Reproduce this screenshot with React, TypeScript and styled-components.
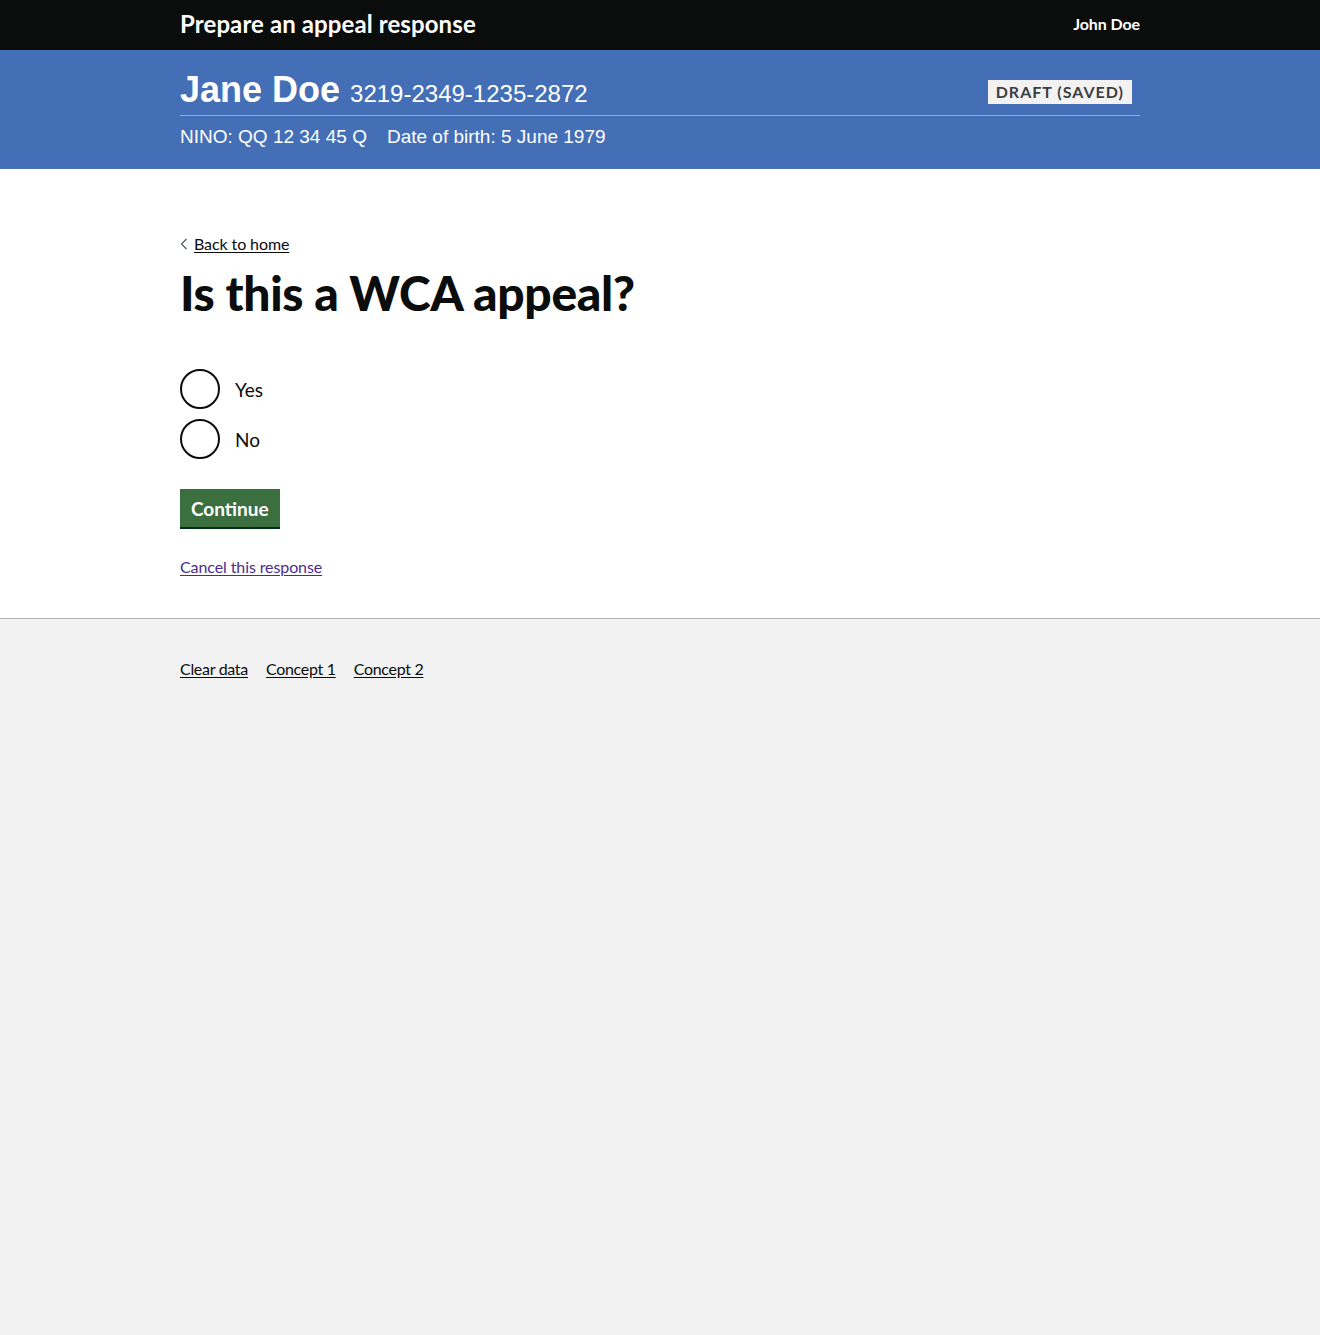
import React from "react";
import styled, { createGlobalStyle } from "styled-components";

const GlobalStyle = createGlobalStyle`
  html, body { margin: 0; padding: 0; }
  body {
    background: #f2f2f2;
    font-family: "Lato", "Liberation Sans", sans-serif;
    color: #0b0c0c;
  }
`;

const Page = styled.div`
  min-height: 1335px;
  display: flex;
  flex-direction: column;
  background: #f2f2f2;
`;

const Container = styled.div`
  width: 960px;
  margin: 0 auto;
`;

const TopBar = styled.header`
  background: #0b0c0c;
  height: 50px;
`;

const TopInner = styled(Container)`
  display: flex;
  justify-content: space-between;
  align-items: center;
  height: 50px;
  box-sizing: border-box;
  padding-bottom: 3px;
`;

const ServiceName = styled.div`
  color: #fff;
  font-weight: 700;
  font-size: 24px;
  letter-spacing: 0.1px;
`;

const UserName = styled.div`
  color: #fff;
  font-weight: 700;
  font-size: 16px;
  letter-spacing: -0.1px;
`;

const Banner = styled.section`
  background: #446fb6;
  height: 119px;
  font-family: "Liberation Sans", Arial, sans-serif;
  color: #fff;
`;

const BannerInner = styled(Container)`
  padding-top: 19px;
`;

const BannerTop = styled.div`
  display: flex;
  justify-content: space-between;
  align-items: center;
  border-bottom: 1px solid #8eabe3;
  height: 46px;
`;

const ClaimantName = styled.h1`
  margin: 0;
  font-size: 36px;
  font-weight: 700;
  line-height: 40px;
  display: flex;
  align-items: baseline;
  gap: 10px;
`;

const Reference = styled.span`
  font-size: 24px;
  font-weight: 400;
`;

const Tag = styled.span`
  background: #f3f2f1;
  color: #383f43;
  font-family: "Lato", "Liberation Sans", sans-serif;
  font-weight: 700;
  font-size: 16px;
  letter-spacing: 1px;
  line-height: 24px;
  padding: 0 8px 0 8px;
  margin-right: 8px;
  margin-top: 0;
`;

const Details = styled.div`
  display: flex;
  gap: 20px;
  font-size: 19px;
  line-height: 24px;
  padding-top: 9px;
`;

const Main = styled.main`
  background: #fff;
  border-bottom: 1px solid #b1b4b6;
  padding: 65px 0 42px;
`;

const BackLink = styled.a`
  display: inline-flex;
  align-items: center;
  gap: 6px;
  color: #0b0c0c;
  font-size: 16px;
  letter-spacing: -0.1px;
  text-decoration: underline;
  text-underline-offset: 2px;
  line-height: 20px;
  cursor: pointer;
`;

const Heading = styled.h2`
  margin: 13px 0 50px;
  font-size: 48px;
  font-weight: 900;
  letter-spacing: -0.35px;
  line-height: 52px;
`;

const RadioList = styled.div`
  display: flex;
  flex-direction: column;
  gap: 10px;
`;

const RadioItem = styled.label`
  display: flex;
  align-items: center;
  gap: 15px;
  font-size: 19px;
  cursor: pointer;
`;

const RadioCircle = styled.span`
  width: 40px;
  height: 40px;
  box-sizing: border-box;
  border: 2px solid #0b0c0c;
  border-radius: 50%;
`;

const Button = styled.button`
  margin-top: 30px;
  background: #3c6f3f;
  color: #fff;
  border: none;
  box-shadow: 0 2px 0 #002d18;
  font-family: inherit;
  font-size: 19px;
  font-weight: 700;
  padding: 0 11px;
  height: 38px;
  cursor: pointer;
`;

const CancelLink = styled.a`
  display: inline-block;
  margin-top: 30px;
  color: #4c2c92;
  font-size: 16px;
  letter-spacing: -0.1px;
  text-decoration: underline;
  text-underline-offset: 2px;
`;

const Footer = styled.footer`
  padding-top: 40px;
`;

const FooterLinks = styled.nav`
  display: flex;
  gap: 18px;
`;

const FooterLink = styled.a`
  color: #0b0c0c;
  font-size: 16px;
  letter-spacing: -0.3px;
  text-decoration: underline;
  text-underline-offset: 2px;
`;

export default function App() {
  return (
    <Page>
      <GlobalStyle />
      <TopBar>
        <TopInner>
          <ServiceName>Prepare an appeal response</ServiceName>
          <UserName>John Doe</UserName>
        </TopInner>
      </TopBar>
      <Banner>
        <BannerInner>
          <BannerTop>
            <ClaimantName>
              Jane Doe <Reference>3219-2349-1235-2872</Reference>
            </ClaimantName>
            <Tag>DRAFT (SAVED)</Tag>
          </BannerTop>
          <Details>
            <span>NINO: QQ 12 34 45 Q</span>
            <span>Date of birth: 5 June 1979</span>
          </Details>
        </BannerInner>
      </Banner>
      <Main>
        <Container>
          <BackLink>
            <svg width="8" height="12" viewBox="0 0 8 12" aria-hidden="true">
              <path d="M6.5 1 L1.5 6 L6.5 11" fill="none" stroke="#505a5f" strokeWidth="1.2" />
            </svg>
            Back to home
          </BackLink>
          <Heading>Is this a WCA appeal?</Heading>
          <RadioList>
            <RadioItem>
              <RadioCircle />
              Yes
            </RadioItem>
            <RadioItem>
              <RadioCircle />
              No
            </RadioItem>
          </RadioList>
          <Button>Continue</Button>
          <div>
            <CancelLink>Cancel this response</CancelLink>
          </div>
        </Container>
      </Main>
      <Footer>
        <Container>
          <FooterLinks>
            <FooterLink>Clear data</FooterLink>
            <FooterLink>Concept 1</FooterLink>
            <FooterLink>Concept 2</FooterLink>
          </FooterLinks>
        </Container>
      </Footer>
    </Page>
  );
}
